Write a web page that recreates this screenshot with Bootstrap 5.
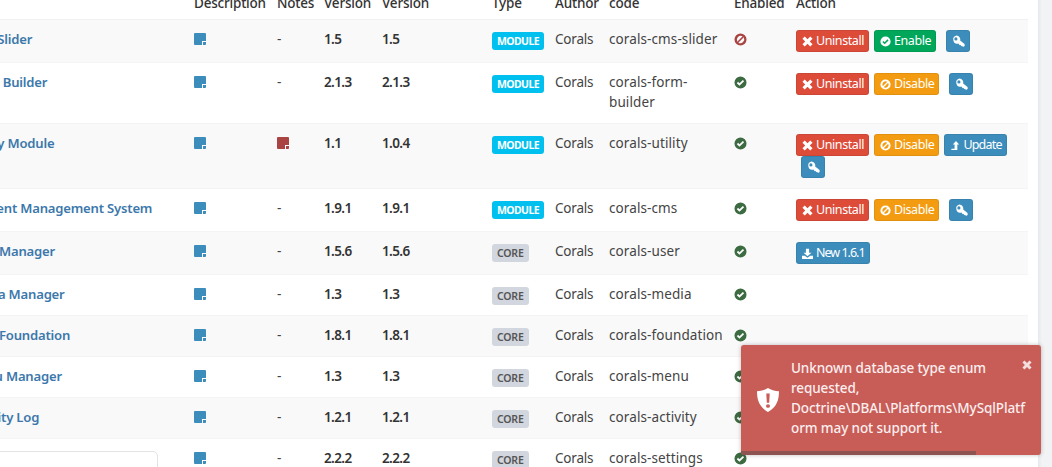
<!doctype html>
<html lang="en"><head><meta charset="utf-8">
<title>Modules</title>
<link href="https://cdn.jsdelivr.net/npm/bootstrap@5.3.0/dist/css/bootstrap.min.css" rel="stylesheet">
<style>
html,body{height:467px;overflow:hidden;background:#fff}
body{font-family:"Noto Sans","Open Sans",sans-serif;font-size:14px;color:#444;position:relative}
.shell{height:467px}
.pane{width:1038px;flex:none;overflow:hidden;background:#fff}
.rail{flex:1;background:linear-gradient(90deg,#e6e9ec,#f1f3f5 4px,#f1f3f5)}
.sheet{margin:-15px 0 0 -41px;width:1069px}
.mods{width:1069px;table-layout:fixed;border-collapse:collapse;margin:0;font-size:13.5px;line-height:20px;letter-spacing:-.2px}
.mods th{font-weight:500;color:#333;padding:8px 8px 6px 8px;border-bottom:1px solid #f1f1f1;vertical-align:bottom;line-height:20px;height:34px}
.mods td{padding:9px 8px 11px 8px;border-top:1px solid #f4f4f4;vertical-align:top;color:#444}
.mods td.btns{padding:10px 8px}
.mods tr.alt td{background:#f9f9f9}
.mods td.nm a{color:#3c78ab;font-weight:600;font-size:13.1px;text-decoration:none;white-space:nowrap}
.mods td.ver{font-weight:600;color:#333;letter-spacing:-.6px}
.mods td.cd{letter-spacing:.1px}
.note{display:block;width:12px;height:12px;margin-top:4px;background:#3c8dbc;border-radius:1px;position:relative}
.note.red{background:#a94442}
.note::after{content:"";position:absolute;right:0;bottom:0;width:4px;height:4px;background:#fff;clip-path:polygon(0 0,100% 0,100% 25%,25% 25%,25% 100%,0 100%)}
.tag{display:inline-block;font-size:10.5px;font-weight:700;line-height:12px;padding:3px 5px;border-radius:3px;margin:3px 0 -1px;vertical-align:top}
.tag-m{background:#00c0ef;color:#fff;letter-spacing:-.6px}
.tag-c{background:#d2d6de;color:#555;letter-spacing:-.2px;font-weight:600}
.stat{display:block;width:13px;height:13px;margin-top:4px}
.act{display:inline-flex;align-items:center;gap:3px;font-size:12.5px;line-height:20px;height:22px;padding:0 4px 0 5px;color:#fff;border-radius:3px;border:1px solid rgba(0,0,0,.07);margin:0 5px 0 0;vertical-align:top;letter-spacing:-.42px}
.act svg{width:11px;height:11px;flex:none}
.a-red{background:#dd4b39}.a-grn{background:#00a65a}.a-org{background:#f39c12}.a-blu{background:#3c8dbc}
.a-key{padding:0 5px;margin-left:5px;width:24px;justify-content:center}
.a-key svg{width:13px;height:13px}
.a-num{letter-spacing:-1px}
.a-upd{letter-spacing:-.8px;gap:2px}
.toastbox{position:absolute;left:741px;top:345px;width:300px;height:110px;background:#c85c57;border-radius:3px;color:#fff;box-shadow:0 0 4px rgba(0,0,0,.25);overflow:hidden}
.toastbox .msg{position:absolute;left:50px;top:13px;width:240px;font-size:13.5px;line-height:20px;font-weight:500;word-break:break-all;letter-spacing:-.1px;color:#fbeeee}
.toastbox .ico{position:absolute;left:16px;top:43px;width:22px;height:24px}
.toastbox .cls{position:absolute;left:281px;top:15px;width:10px;height:10px;color:#f3dede}
.toastbox .prog{position:absolute;left:0;bottom:0;height:4px;width:235px;background:#8e5452}
.floatbox{position:absolute;left:-4px;top:451px;width:162px;height:30px;background:#fff;border:1px solid #e3e3e3;border-radius:5px}
</style></head><body>
<svg width="0" height="0" style="position:absolute" aria-hidden="true"><defs>
<symbol id="i-x" viewBox="0 0 12 12"><path d="M3 .5 6 3.500 9 .5 11.500 3 8.500 6 11.500 9 9 11.500 6 8.500 3 11.500 .5 9 3.500 6 .5 3z" fill="currentColor"/></symbol>
<symbol id="i-ok" viewBox="0 0 14 14"><path fill-rule="evenodd" d="M7 .5a6.500 6.500 0 1 1 0 13 6.500 6.500 0 0 1 0-13zM5.900 10.600l5-5-1.400-1.400-3.600 3.600-1.500-1.500-1.400 1.400z" fill="currentColor"/></symbol>
<symbol id="i-ban" viewBox="0 0 14 14"><path fill-rule="evenodd" d="M7 .5a6.500 6.500 0 1 1 0 13 6.500 6.500 0 0 1 0-13zM3.500 9.300l5.800-5.800A4.300 4.300 0 0 0 3.500 9.300zM4.700 10.500A4.300 4.300 0 0 0 10.500 4.700z" fill="currentColor"/></symbol>
<symbol id="i-key" viewBox="0 0 14 14"><path fill-rule="evenodd" d="M4.800 .6a4.200 4.200 0 0 1 4 5.400l4.700 3.800.2 1.700-1.100 1.100-1.300-.1-.5-1-.9.5-.5-1.200-1 .2-1.600-1.800A4.200 4.200 0 1 1 4.800.6zM4.200 2.500a1.700 1.700 0 1 0 0 3.400 1.700 1.700 0 0 0 0-3.400z" fill="currentColor"/></symbol>
<symbol id="i-up" viewBox="0 0 12 12"><path d="M6.500 1 10 5H8v6H1.500V9.500H5V5H3z" fill="currentColor"/></symbol>
<symbol id="i-dl" viewBox="0 0 14 14"><path d="M5 1h4v5h3L7 10.500 2 6h3zM0 10h3.500L7 12.500 10.500 10H14v4H0z" fill="currentColor"/></symbol>
</defs></svg>
<div class="shell d-flex">
<div class="pane">
<div class="sheet">
<table class="mods">
<colgroup><col style="width:227px"><col style="width:83px"><col style="width:47px"><col style="width:58px"><col style="width:110px"><col style="width:63px"><col style="width:54px"><col style="width:125px"><col style="width:62px"><col></colgroup>
<thead><tr><th></th><th>Description</th><th>Notes</th><th>Version</th><th>Version</th><th>Type</th><th>Author</th><th>code</th><th>Enabled</th><th>Action</th></tr></thead>
<tbody>
<tr class="alt"><td class="nm"><a href="#">CMS Slider</a></td><td><i class="note"></i></td><td>-</td><td class="ver">1.5</td><td class="ver">1.5</td><td><span class="tag tag-m">MODULE</span></td><td>Corals</td><td class="cd">corals-cms-slider</td><td><svg class="stat" style="color:#a94442"><use href="#i-ban"/></svg></td>
<td class="btns"><span class="act a-red"><svg><use href="#i-x"/></svg>Uninstall</span><span class="act a-grn"><svg><use href="#i-ok"/></svg>Enable</span><span class="act a-blu a-key"><svg><use href="#i-key"/></svg></span></td></tr>
<tr><td class="nm"><a href="#">Form Builder</a></td><td><i class="note"></i></td><td>-</td><td class="ver">2.1.3</td><td class="ver">2.1.3</td><td><span class="tag tag-m">MODULE</span></td><td>Corals</td><td class="cd">corals-form-builder</td><td><svg class="stat" style="color:#3c6b42"><use href="#i-ok"/></svg></td>
<td class="btns"><span class="act a-red"><svg><use href="#i-x"/></svg>Uninstall</span><span class="act a-org"><svg><use href="#i-ban"/></svg>Disable</span><span class="act a-blu a-key"><svg><use href="#i-key"/></svg></span></td></tr>
<tr class="alt"><td class="nm"><a href="#">Utility Module</a></td><td><i class="note"></i></td><td><i class="note red"></i></td><td class="ver">1.1</td><td class="ver">1.0.4</td><td><span class="tag tag-m">MODULE</span></td><td>Corals</td><td class="cd">corals-utility</td><td><svg class="stat" style="color:#3c6b42"><use href="#i-ok"/></svg></td>
<td class="btns"><span class="act a-red"><svg><use href="#i-x"/></svg>Uninstall</span><span class="act a-org"><svg><use href="#i-ban"/></svg>Disable</span><span class="act a-blu a-upd"><svg><use href="#i-up"/></svg>Update</span><span class="act a-blu a-key"><svg><use href="#i-key"/></svg></span></td></tr>
<tr><td class="nm"><a href="#">Content Management System</a></td><td><i class="note"></i></td><td>-</td><td class="ver">1.9.1</td><td class="ver">1.9.1</td><td><span class="tag tag-m">MODULE</span></td><td>Corals</td><td class="cd">corals-cms</td><td><svg class="stat" style="color:#3c6b42"><use href="#i-ok"/></svg></td>
<td class="btns"><span class="act a-red"><svg><use href="#i-x"/></svg>Uninstall</span><span class="act a-org"><svg><use href="#i-ban"/></svg>Disable</span><span class="act a-blu a-key"><svg><use href="#i-key"/></svg></span></td></tr>
<tr class="alt"><td class="nm"><a href="#">User Manager</a></td><td><i class="note"></i></td><td>-</td><td class="ver">1.5.6</td><td class="ver">1.5.6</td><td><span class="tag tag-c">CORE</span></td><td>Corals</td><td class="cd">corals-user</td><td><svg class="stat" style="color:#3c6b42"><use href="#i-ok"/></svg></td>
<td class="btns"><span class="act a-blu a-num"><svg><use href="#i-dl"/></svg>New 1.6.1</span></td></tr>
<tr><td class="nm"><a href="#">Media Manager</a></td><td><i class="note"></i></td><td>-</td><td class="ver">1.3</td><td class="ver">1.3</td><td><span class="tag tag-c">CORE</span></td><td>Corals</td><td class="cd">corals-media</td><td><svg class="stat" style="color:#3c6b42"><use href="#i-ok"/></svg></td><td></td></tr>
<tr class="alt"><td class="nm"><a href="#">Core Foundation</a></td><td><i class="note"></i></td><td>-</td><td class="ver">1.8.1</td><td class="ver">1.8.1</td><td><span class="tag tag-c">CORE</span></td><td>Corals</td><td class="cd text-nowrap">corals-foundation</td><td><svg class="stat" style="color:#3c6b42"><use href="#i-ok"/></svg></td><td></td></tr>
<tr><td class="nm"><a href="#">Menu Manager</a></td><td><i class="note"></i></td><td>-</td><td class="ver">1.3</td><td class="ver">1.3</td><td><span class="tag tag-c">CORE</span></td><td>Corals</td><td class="cd">corals-menu</td><td><svg class="stat" style="color:#3c6b42"><use href="#i-ok"/></svg></td><td></td></tr>
<tr class="alt"><td class="nm"><a href="#">Activity Log</a></td><td><i class="note"></i></td><td>-</td><td class="ver">1.2.1</td><td class="ver">1.2.1</td><td><span class="tag tag-c">CORE</span></td><td>Corals</td><td class="cd">corals-activity</td><td><svg class="stat" style="color:#3c6b42"><use href="#i-ok"/></svg></td><td></td></tr>
<tr><td class="nm"></td><td><i class="note"></i></td><td>-</td><td class="ver">2.2.2</td><td class="ver">2.2.2</td><td><span class="tag tag-c">CORE</span></td><td>Corals</td><td class="cd">corals-settings</td><td><svg class="stat" style="color:#3c6b42"><use href="#i-ok"/></svg></td><td></td></tr>
</tbody></table>
</div>
</div>
<div class="rail"></div>
</div>
<div class="floatbox"></div>
<div class="toastbox" role="alert">
<svg class="ico" viewBox="0 0 22 26" preserveAspectRatio="none"><path fill-rule="evenodd" d="M11 0c3 2.200 6.500 3.300 11 3.500 0 9-2 17-11 22.500C2 20.500 0 12.500 0 3.500 4.500 3.300 8 2.200 11 0zM9.300 6l.5 10h2.400l.5-10zM11 17.500a2 2 0 1 0 0 4 2 2 0 0 0 0-4z" fill="#fff"/></svg>
<div class="msg">Unknown database type enum<br>requested,<br>Doctrine\DBAL\Platforms\MySqlPlatform may not support it.</div>
<svg class="cls"><use href="#i-x"/></svg>
<div class="prog"></div>
</div>
<script src="https://cdn.jsdelivr.net/npm/bootstrap@5.3.0/dist/js/bootstrap.bundle.min.js"></script>
</body></html>
